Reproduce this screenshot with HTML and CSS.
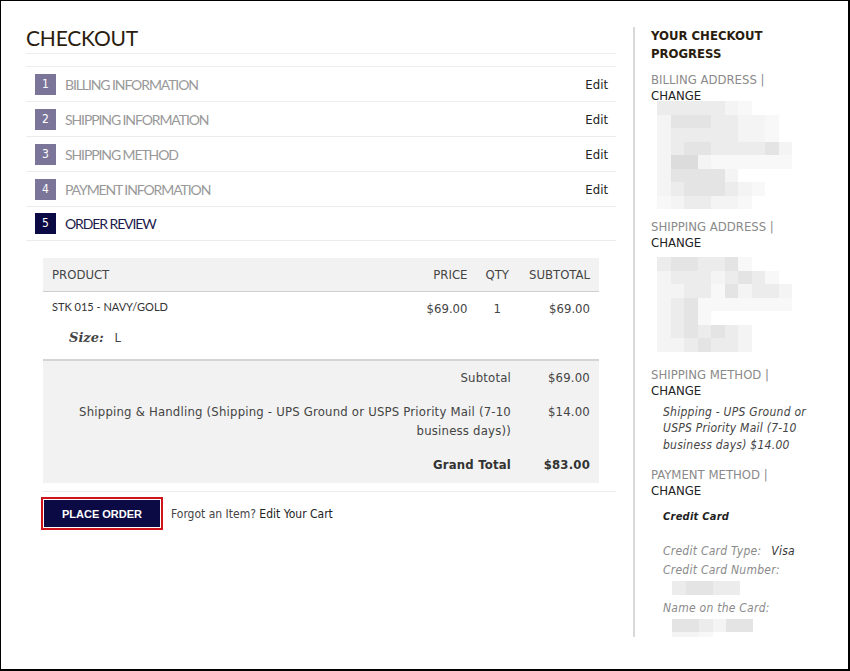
FILE: index.html
```html
<!DOCTYPE html>
<html lang="en">
<head>
    <meta charset="UTF-8">
    <meta name="viewport" content="width=device-width, initial-scale=1.0">
    <title>Checkout</title>
    <link rel="stylesheet" href="styles.css">
</head>
<body>
<div class="frame">
    <main class="checkout">
        <h1 class="page-title">CHECKOUT</h1>
        <ol class="steps">
            <li class="step"><span class="step-num">1</span><span class="step-name">BILLING INFORMATION</span><a class="step-edit" href="#">Edit</a></li>
            <li class="step"><span class="step-num">2</span><span class="step-name">SHIPPING INFORMATION</span><a class="step-edit" href="#">Edit</a></li>
            <li class="step"><span class="step-num">3</span><span class="step-name">SHIPPING METHOD</span><a class="step-edit" href="#">Edit</a></li>
            <li class="step"><span class="step-num">4</span><span class="step-name">PAYMENT INFORMATION</span><a class="step-edit" href="#">Edit</a></li>
            <li class="step active"><span class="step-num">5</span><span class="step-name">ORDER REVIEW</span></li>
        </ol>

        <table class="review">
            <thead>
                <tr>
                    <th class="col-product">PRODUCT</th>
                    <th class="col-price">PRICE</th>
                    <th class="col-qty">QTY</th>
                    <th class="col-sub">SUBTOTAL</th>
                </tr>
            </thead>
            <tbody>
                <tr>
                    <td class="col-product">
                        <div class="item-name">STK 015 - NAVY/GOLD</div>
                        <div class="item-option"><em>Size:</em> L</div>
                    </td>
                    <td class="col-price">$69.00</td>
                    <td class="col-qty">1</td>
                    <td class="col-sub">$69.00</td>
                </tr>
            </tbody>
            <tfoot>
                <tr class="first">
                    <td colspan="3">Subtotal</td>
                    <td>$69.00</td>
                </tr>
                <tr>
                    <td colspan="3">Shipping &amp; Handling (Shipping - UPS Ground or USPS Priority Mail (7-10<br>business days))</td>
                    <td>$14.00</td>
                </tr>
                <tr class="grand">
                    <td colspan="3"><strong>Grand Total</strong></td>
                    <td><strong>$83.00</strong></td>
                </tr>
            </tfoot>
        </table>

        <div class="actions">
            <button type="button" class="btn-place">PLACE ORDER</button>
            <span class="forgot">Forgot an Item? <a href="#">Edit Your Cart</a></span>
        </div>
    </main>

    <aside class="progress">
        <h2>YOUR CHECKOUT PROGRESS</h2>

        <div class="block billing">
            <div class="block-title">BILLING ADDRESS | <a href="#">CHANGE</a></div>
            <div class="mosaic cols-10">
                <i class="b"></i><i class="b"></i><i class="b"></i><i class="b"></i><i class="b"></i><i class="a"></i><i class="w"></i><i></i><i></i><i></i>
                <i class="a"></i><i class="c"></i><i class="c"></i><i class="c"></i><i class="b"></i><i class="b"></i><i class="a"></i><i class="a"></i><i class="w"></i><i></i>
                <i class="a"></i><i class="b"></i><i class="b"></i><i class="b"></i><i class="b"></i><i class="b"></i><i class="a"></i><i class="a"></i><i class="w"></i><i></i>
                <i class="a"></i><i class="b"></i><i class="c"></i><i class="c"></i><i class="b"></i><i class="b"></i><i class="b"></i><i class="b"></i><i class="c"></i><i class="a"></i>
                <i class="a"></i><i class="d"></i><i class="d"></i><i class="a"></i><i class="w"></i><i class="w"></i><i class="w"></i><i class="w"></i><i class="w"></i><i class="w"></i>
                <i class="a"></i><i class="c"></i><i class="c"></i><i class="c"></i><i class="c"></i><i class="a"></i><i></i><i></i><i></i><i></i>
                <i class="a"></i><i class="b"></i><i class="c"></i><i class="c"></i><i class="c"></i><i class="b"></i><i class="a"></i><i class="w"></i><i></i><i></i>
                <i class="w"></i><i class="a"></i><i class="b"></i><i class="b"></i><i class="a"></i><i class="a"></i><i class="w"></i><i></i><i></i><i></i>
            </div>
        </div>

        <div class="block shipping">
            <div class="block-title">SHIPPING ADDRESS | <a href="#">CHANGE</a></div>
            <div class="mosaic cols-10">
                <i class="b"></i><i class="c"></i><i class="c"></i><i class="b"></i><i class="b"></i><i class="c"></i><i class="w"></i><i></i><i></i><i></i>
                <i class="a"></i><i class="b"></i><i class="b"></i><i class="b"></i><i class="a"></i><i class="b"></i><i class="c"></i><i class="b"></i><i class="w"></i><i></i>
                <i class="a"></i><i class="a"></i><i class="b"></i><i class="b"></i><i class="w"></i><i class="c"></i><i class="a"></i><i class="b"></i><i class="b"></i><i class="a"></i>
                <i class="a"></i><i class="b"></i><i class="c"></i><i class="w"></i><i class="w"></i><i class="w"></i><i class="w"></i><i class="w"></i><i class="w"></i><i class="w"></i>
                <i class="a"></i><i class="b"></i><i class="c"></i><i class="w"></i><i></i><i></i><i></i><i></i><i></i><i></i>
                <i class="a"></i><i class="b"></i><i class="c"></i><i class="b"></i><i class="c"></i><i class="b"></i><i class="a"></i><i></i><i></i><i></i>
                <i class="a"></i><i class="a"></i><i class="b"></i><i class="c"></i><i class="b"></i><i class="b"></i><i class="a"></i><i></i><i></i><i></i>
            </div>
        </div>

        <div class="block method">
            <div class="block-title">SHIPPING METHOD | <a href="#">CHANGE</a></div>
            <p class="detail">Shipping - UPS Ground or USPS Priority Mail (7-10 business days) $14.00</p>
        </div>

        <div class="block payment">
            <div class="block-title">PAYMENT METHOD | <a href="#">CHANGE</a></div>
            <div class="detail">
                <div class="card-kind">Credit Card</div>
                <dl class="card-info">
                    <dt>Credit Card Type:</dt><dd class="inline">Visa</dd>
                    <dt>Credit Card Number:</dt>
                    <dd class="mosaic cols-5">
                        <i class="b"></i><i class="c"></i><i class="c"></i><i class="b"></i><i class="b"></i>
                    </dd>
                    <dt>Name on the Card:</dt>
                    <dd class="mosaic cols-6">
                        <i class="c"></i><i class="c"></i><i class="b"></i><i class="a"></i><i class="c"></i><i class="c"></i>
                        <i class="a"></i><i class="a"></i><i class="w"></i><i></i><i></i><i></i>
                    </dd>
                </dl>
            </div>
        </div>
    </aside>
</div>
</body>
</html>
```

FILE: styles.css
```css
* {
    box-sizing: border-box;
}
body {
    margin: 0;
    background: #fff;
    font-family: Tahoma, "DejaVu Sans Condensed", "DejaVu Sans", sans-serif;
    font-size: 13px;
    color: #444;
}
a {
    color: #222;
    text-decoration: none;
}
.frame {
    width: 850px;
    height: 671px;
    border: 1px solid #000;
    border-right-width: 2px;
    border-bottom-width: 2px;
    display: flex;
    align-items: flex-start;
    gap: 17px;
    padding: 24px 0 0 25px;
    overflow: hidden;
}

/* main column */
.checkout {
    width: 590px;
}
.page-title {
    margin: 0;
    padding-bottom: 2px;
    font-family: Lato, "Open Sans", sans-serif;
    font-weight: 400;
    font-size: 21px;
    letter-spacing: -0.2px;
    line-height: 26px;
    color: #2b1d0e;
    border-bottom: 1px solid #ececec;
}
.steps {
    list-style: none;
    margin: 12px 0 0;
    padding: 0;
    border-bottom: 1px solid #ececec;
}
.step {
    display: flex;
    align-items: center;
    height: 35px;
    padding: 0 8px 0 9px;
    border-top: 1px solid #ececec;
}
.step:last-child {
    height: 34px;
}
.step-num {
    width: 21px;
    height: 21px;
    margin-right: 9px;
    background: #7b7699;
    color: #fff;
    font-size: 12px;
    line-height: 21px;
    text-align: center;
}
.step-name {
    flex: 1;
    font-family: Lato, "Open Sans", sans-serif;
    font-weight: 400;
    font-size: 14px;
    letter-spacing: -1.1px;
    color: #999;
}
.step-edit {
    font-size: 13px;
    color: #222;
}
.step.active .step-num {
    background: #0b0a45;
}
.step.active .step-name {
    color: #1d1b4d;
}

/* order table */
.review {
    width: 556px;
    margin: 17px 0 0 17px;
    border-collapse: collapse;
}
.review th {
    height: 33px;
    padding: 0 9px;
    background: #f2f2f2;
    font-weight: 400;
    color: #444;
    border-bottom: 1px solid #cfcfcf;
}
.review td {
    padding: 0 9px;
    vertical-align: top;
}
.col-product {
    text-align: left;
}
.col-price {
    width: 75px;
    text-align: right;
}
.col-qty {
    width: 40px;
    text-align: center;
}
.col-sub {
    width: 81px;
    text-align: right;
}
.review tbody td {
    padding-top: 8px;
    height: 69px;
    border-bottom: 2px solid #d4d4d4;
}
.review tbody td.col-price,
.review tbody td.col-sub,
.review tbody td.col-qty {
    padding-top: 9px;
}
.item-name {
    font-family: Lato, "Open Sans", sans-serif;
    font-size: 11px;
    color: #333;
}
.item-option {
    margin-top: 17px;
    padding-left: 17px;
}
.item-option em {
    font-family: "DejaVu Serif", Georgia, serif;
    font-weight: bold;
    margin-right: 7px;
}
.review tfoot td {
    background: #f2f2f2;
    text-align: right;
    line-height: 19px;
    letter-spacing: 0.2px;
    padding: 0 9px 15px;
}
.review tfoot td[colspan] {
    padding-right: 7px;
}
.review tfoot tr.first td {
    padding-top: 7px;
}
.review tfoot tr.grand td {
    padding-top: 0;
    padding-bottom: 9px;
    color: #333;
}
.actions {
    display: flex;
    align-items: center;
    gap: 11px;
    margin: 8px 0 0 17px;
    padding: 8px 0 0 1px;
    border-top: 1px solid #ececec;
}
.btn-place {
    width: 116px;
    height: 27px;
    margin: 0;
    padding: 0;
    border: 0;
    background: #0b0a45;
    color: #fff;
    font-family: "Liberation Sans", Arial, sans-serif;
    font-weight: bold;
    font-size: 11px;
    outline: 2px solid #d0141c;
    outline-offset: 1px;
}
.forgot {
    font-size: 12px;
    color: #444;
}

/* sidebar */
.progress {
    width: 198px;
    height: 610px;
    margin-top: 2px;
    padding: 0 0 0 16px;
    border-left: 2px solid #d9d9d9;
    overflow: hidden;
}
.progress h2 {
    margin: 0 0 9px;
    font-size: 13px;
    line-height: 18px;
    font-weight: bold;
    color: #2b1d0e;
}
.block-title {
    width: 140px;
    color: #8a8a8a;
    line-height: 16px;
}
.mosaic {
    display: grid;
    grid-auto-rows: 13.5px;
    margin: 0 0 0 6px;
}
.billing .mosaic {
    margin-top: -3px;
    margin-bottom: 10px;
}
.shipping .mosaic {
    margin-top: 6px;
    margin-bottom: 15px;
}
.mosaic.cols-10 {
    grid-template-columns: repeat(10, 13.5px);
}
.mosaic.cols-5 {
    grid-template-columns: repeat(5, 13.5px);
}
.mosaic.cols-6 {
    grid-template-columns: repeat(6, 13.5px);
}
.mosaic .a { background: #f4f4f4; }
.mosaic .b { background: #ececec; }
.mosaic .c { background: #e4e4e4; }
.mosaic .d { background: #dcdcdc; }
.mosaic .w { background: #f8f8f8; }
.detail {
    margin: 5px 0 14px 12px;
    font-size: 12px;
    font-style: italic;
    line-height: 16.5px;
    letter-spacing: 0.25px;
    color: #444;
}
.card-kind {
    margin-top: 11px;
    font-size: 11px;
    line-height: 14px;
    font-weight: bold;
    color: #222;
}
.card-info {
    margin: 18px 0 0;
    color: #8a8a8a;
}
.card-info dt {
    line-height: 19px;
}
.card-info dt:first-child {
    display: inline;
    margin-right: 10px;
}
.card-info dd {
    margin: 0;
}
.card-info dd.inline {
    display: inline;
    color: #333;
}
.card-info dd.mosaic {
    margin: 1px 0 4px 9px;
}
```
